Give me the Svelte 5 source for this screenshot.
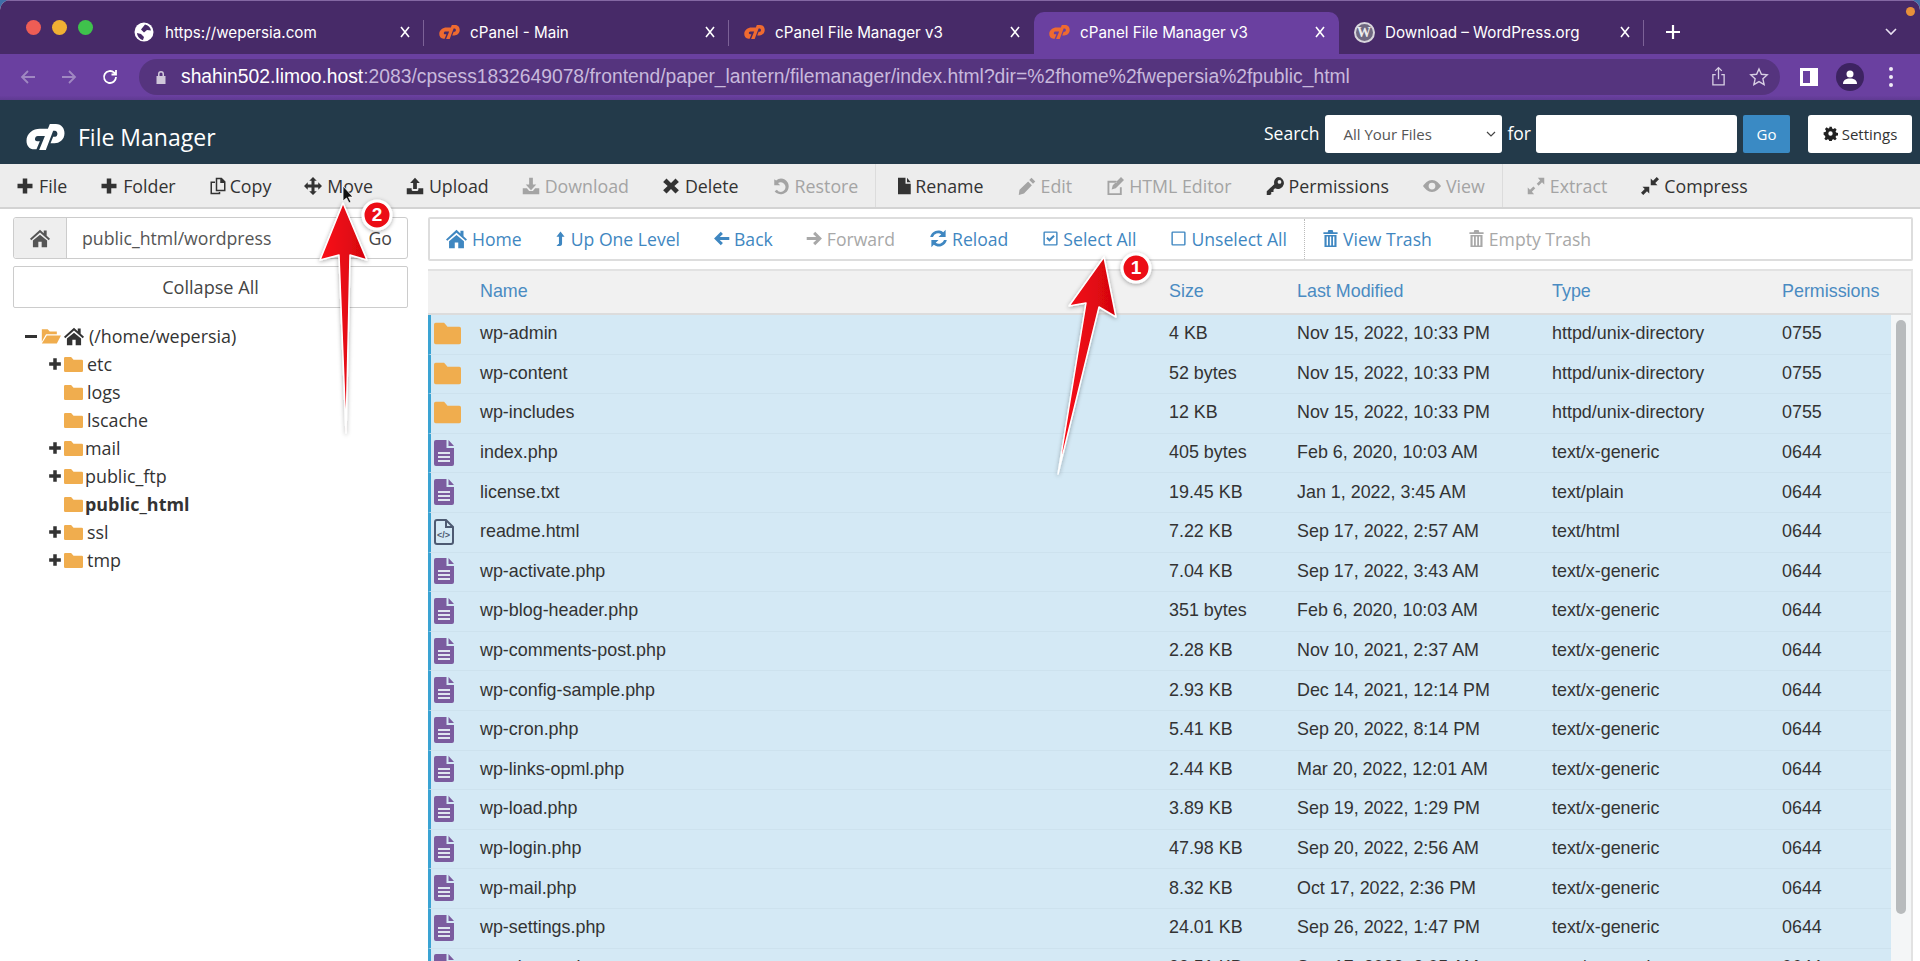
<script lang="ts">
  const icons: Record<string, string> = {
    plus: 'M9 2h6v7h7v6h-7v7H9v-7H2V9h7z',
    copy: 'M9 1h8l5 5v13H9zM11 3v14h9V8h-5V3zM2 6h6v2H4v13h9v-1h2v3H2z',
    move: 'M12 0l5 5H14v5h5V7l5 5-5 5v-3h-5v5h3l-5 5-5-5h3v-5H5v3l-5-5 5-5v3h5V5H7z',
    upload: 'M12 1l6.500 7H14.500v8h-5V8H5.500zM1 15h6.500v2a1.500 1.500 0 001.500 1.500h6a1.500 1.500 0 001.500-1.500v-2H23v8H1z',
    download: 'M9.500 1h5v9h4.500L12 17.500 5 10h4.500zM1 15h5.500l3 3.500h5l3-3.500H23v8H1z',
    times: 'M6 2l6 6 6-6 4.500 4.500-6 5.500 6 5.500-4.500 4.500-6-6-6 6-4.500-4.500 6-5.500-6-5.500z',
    undo: 'M3 3v8h8L8 8a6.500 6.500 0 114 12 6.500 6.500 0 01-5.500-3l-3 2A10.500 10.500 0 1012 2a10.500 10.500 0 00-6.500 2.500z',
    file: 'M4 1h10v8h7v14H4zM16 1l5 6h-5z',
    pencil: 'M18 1l5 5-3 3-5-5zM13.500 6l5 5L8 22l-7 2 1-7z',
    edit: 'M2 5h12v2.500H4.500v14h14v-8H21V24H2zM20 0l4 4-11 11-5.500 1.500L9 11z',
    key: 'M16 0a8 8 0 11-4 15l-2 2v3H7v3l-2 1H1v-5l10-9.500A8 8 0 0116 0zM18 4a2.500 2.500 0 100 5 2.500 2.500 0 000-5z',
    eye: 'M12 4c5.500 0 9.500 4.500 12 8-2.500 3.500-6.500 8-12 8S2.500 15.500 0 12c2.500-3.500 6.500-8 12-8zM12 7.500a4.500 4.500 0 100 9 4.500 4.500 0 000-9z',
    expand: 'M23 1v9l-3-3-4.500 4.500-2.500-2.500L17.500 4.500 14.500 1zM1 23v-9l3 3 4.500-4.500L11 15l-4.500 4.500 3 3.500z',
    compress: 'M13 11V2l3 3 5-5 3 3-5 5 3 3zM11 13v9l-3-3-5 5-3-3 5-5-3-3z',
    home: 'M12 2L0 13l1.500 1.700L12 5.500l10.500 9.200L24 13l-4-3.600V3h-3.500v3.200zM12 8L3.500 15v8H10v-6.500h4V23h6.500v-8z',
    up: 'M12 0l6.500 8.500h-4V19c0 2.500-1 4-3.500 4H5.500l3-3H9.500V8.500h-4z',
    back: 'M11 2.500l3 3L9.500 10H23v4H9.500l4.500 4.500-3 3L1.500 12z',
    forward: 'M13 2.500l-3 3 4.500 4.500H1v4h13.500L10 18.500l3 3 9.500-9.500z',
    reload: 'M21 1v9h-9l3.500-3.500A7 7 0 005 10H1.500A10.500 10.500 0 0118 4zM3 23v-9h9l-3.500 3.500A7 7 0 0019 14h3.500A10.500 10.500 0 016 20z',
    check: 'M4 2h16a2 2 0 012 2v16a2 2 0 01-2 2H4a2 2 0 01-2-2V4a2 2 0 012-2zM4 4v16h16V4zM6 12l2-2 2.500 2.500L16 7l2 2-7.500 7.500z',
    square: 'M4 2h16a2 2 0 012 2v16a2 2 0 01-2 2H4a2 2 0 01-2-2V4a2 2 0 012-2zM4 4v16h16V4z',
    trash: 'M9 0h6l1 3h6v2.500H2V3h6zM3.500 7h17v17h-17zM6.500 9v13h2V9zM11 9v13h2V9zM15.500 9v13h2V9z',
    gear: 'M10 1h4l.6 3.100 2 .8 2.600-1.800 2.700 2.700-1.800 2.600.8 2 3.100.6v4l-3.100.6-.8 2 1.800 2.600-2.700 2.700-2.600-1.800-2 .8-.6 3.100h-4l-.6-3.100-2-.8-2.600 1.800-2.700-2.700 1.800-2.600-.8-2L1 14v-4l3.100-.6.8-2-1.800-2.600 2.700-2.700 2.600 1.800 2-.8zM12 8.500a3.500 3.500 0 100 7 3.500 3.500 0 000-7z',
    folder: 'M0 4a1.500 1.500 0 011.500-1.500H9L12 6h10.500A1.500 1.500 0 0124 7.500V20a1.500 1.500 0 01-1.500 1.500h-21A1.500 1.500 0 010 20z',
    folderOpen: 'M1 4h7l2.500 2.500H19V10H6L1 19zM7 11.500h17L19 21H1z',
    cp: 'M66 14L58 36H34C24 36 22 52 32 52H40L30 76H24C8 76 0 64 0 50C0 28 20 14 40 14ZM70 0H88C106 0 114 14 114 28C114 48 98 58 84 58H72L80 38H86C94 38 96 22 86 20H80L58 78H38Z'
  };

  const tabs = [
    { title: 'https://wepersia.com', icon: 'globe' },
    { title: 'cPanel - Main', icon: 'cp' },
    { title: 'cPanel File Manager v3', icon: 'cp' },
    { title: 'cPanel File Manager v3', icon: 'cp', active: true },
    { title: 'Download – WordPress.org', icon: 'wp' }
  ];

  const groups = [
    [
      { label: 'File', icon: 'plus' },
      { label: 'Folder', icon: 'plus' },
      { label: 'Copy', icon: 'copy' },
      { label: 'Move', icon: 'move' },
      { label: 'Upload', icon: 'upload' },
      { label: 'Download', icon: 'download', off: true },
      { label: 'Delete', icon: 'times' },
      { label: 'Restore', icon: 'undo', off: true }
    ],
    [
      { label: 'Rename', icon: 'file' },
      { label: 'Edit', icon: 'pencil', off: true },
      { label: 'HTML Editor', icon: 'edit', off: true },
      { label: 'Permissions', icon: 'key' },
      { label: 'View', icon: 'eye', off: true }
    ],
    [
      { label: 'Extract', icon: 'expand', off: true },
      { label: 'Compress', icon: 'compress' }
    ]
  ];

  const actions = [
    { label: 'Home', icon: 'home' },
    { label: 'Up One Level', icon: 'up' },
    { label: 'Back', icon: 'back' },
    { label: 'Forward', icon: 'forward', off: true },
    { label: 'Reload', icon: 'reload' },
    { label: 'Select All', icon: 'check' },
    { label: 'Unselect All', icon: 'square' }
  ];

  const tree = [
    { name: 'etc', toggle: true },
    { name: 'logs' },
    { name: 'lscache' },
    { name: 'mail', toggle: true },
    { name: 'public_ftp', toggle: true },
    { name: 'public_html', current: true },
    { name: 'ssl', toggle: true },
    { name: 'tmp', toggle: true }
  ];

  const dirDate = 'Nov 15, 2022, 10:33 PM';
  const generic = 'text/x-generic';
  const files = [
    { name: 'wp-admin', size: '4 KB', date: dirDate, type: 'httpd/unix-directory', perm: '0755', kind: 'dir' },
    { name: 'wp-content', size: '52 bytes', date: dirDate, type: 'httpd/unix-directory', perm: '0755', kind: 'dir' },
    { name: 'wp-includes', size: '12 KB', date: dirDate, type: 'httpd/unix-directory', perm: '0755', kind: 'dir' },
    { name: 'index.php', size: '405 bytes', date: 'Feb 6, 2020, 10:03 AM', type: generic, perm: '0644', kind: 'file' },
    { name: 'license.txt', size: '19.45 KB', date: 'Jan 1, 2022, 3:45 AM', type: 'text/plain', perm: '0644', kind: 'file' },
    { name: 'readme.html', size: '7.22 KB', date: 'Sep 17, 2022, 2:57 AM', type: 'text/html', perm: '0644', kind: 'html' },
    { name: 'wp-activate.php', size: '7.04 KB', date: 'Sep 17, 2022, 3:43 AM', type: generic, perm: '0644', kind: 'file' },
    { name: 'wp-blog-header.php', size: '351 bytes', date: 'Feb 6, 2020, 10:03 AM', type: generic, perm: '0644', kind: 'file' },
    { name: 'wp-comments-post.php', size: '2.28 KB', date: 'Nov 10, 2021, 2:37 AM', type: generic, perm: '0644', kind: 'file' },
    { name: 'wp-config-sample.php', size: '2.93 KB', date: 'Dec 14, 2021, 12:14 PM', type: generic, perm: '0644', kind: 'file' },
    { name: 'wp-cron.php', size: '5.41 KB', date: 'Sep 20, 2022, 8:14 PM', type: generic, perm: '0644', kind: 'file' },
    { name: 'wp-links-opml.php', size: '2.44 KB', date: 'Mar 20, 2022, 12:01 AM', type: generic, perm: '0644', kind: 'file' },
    { name: 'wp-load.php', size: '3.89 KB', date: 'Sep 19, 2022, 1:29 PM', type: generic, perm: '0644', kind: 'file' },
    { name: 'wp-login.php', size: '47.98 KB', date: 'Sep 20, 2022, 2:56 AM', type: generic, perm: '0644', kind: 'file' },
    { name: 'wp-mail.php', size: '8.32 KB', date: 'Oct 17, 2022, 2:36 PM', type: generic, perm: '0644', kind: 'file' },
    { name: 'wp-settings.php', size: '24.01 KB', date: 'Sep 26, 2022, 1:47 PM', type: generic, perm: '0644', kind: 'file' },
    { name: 'wp-signup.php', size: '33.51 KB', date: 'Sep 17, 2022, 3:05 AM', type: generic, perm: '0644', kind: 'file' }
  ];
</script>

{#snippet icon(name: string, cls = 'ico')}
  <svg class={cls} viewBox="0 0 24 24" aria-hidden="true"><path fill-rule="evenodd" d={icons[name]} /></svg>
{/snippet}

<div class="window">
  <div class="tabstrip">
    <div class="lights">
      <span class="light red"></span>
      <span class="light yellow"></span>
      <span class="light green"></span>
    </div>
    {#each tabs as tab}
      <div class="tab" class:active={tab.active}>
        <span class="favicon">
          {#if tab.icon === 'cp'}
            <svg class="fav-cp" viewBox="0 0 114 78"><path d={icons.cp} /></svg>
          {:else if tab.icon === 'globe'}
            <svg class="fav" viewBox="0 0 20 20">
              <circle cx="10" cy="10" r="9.500" fill="#fff" />
              <path fill="#472a68" d="M11 2.500c3 .5 5.500 2.500 6 6l-4-.5-3 2.500-3-3zM3 11l4 1 3 3-1 3c-3-.5-5.500-3-6-7z" />
            </svg>
          {:else}
            <span class="fav-wp">W</span>
          {/if}
        </span>
        <span class="tab-title">{tab.title}</span>
        <svg class="tab-close" viewBox="0 0 10 12"><path d="M1 1l8 10M9 1L1 11" /></svg>
      </div>
    {/each}
    <svg class="newtab" viewBox="0 0 16 16"><path d="M8 1v14M1 8h14" /></svg>
    <svg class="chevron" viewBox="0 0 12 8"><path d="M1 1l5 5 5-5" /></svg>
    <span class="update-dot"></span>
  </div>

  <div class="navbar">
    <svg class="nav-ico dim" viewBox="0 0 18 18"><path d="M16 9H3M9 3L3 9l6 6" /></svg>
    <svg class="nav-ico dim" viewBox="0 0 18 18"><path d="M2 9h13M9 3l6 6-6 6" /></svg>
    <svg class="nav-ico" viewBox="0 0 18 18"><path d="M15 9a6 6 0 11-1.800-4.300L15 6.500M15 2v4.500h-4.500" /></svg>
    <div class="omnibox">
      <svg class="lock" viewBox="0 0 12 14"><path d="M3 6V4a3 3 0 016 0v2h1.500v8h-9V6zM4.500 6h3V4a1.500 1.500 0 00-3 0z" /></svg>
      <span class="url"><b>shahin502.limoo.host</b>:2083/cpsess1832649078/frontend/paper_lantern/filemanager/index.html?dir=%2fhome%2fwepersia%2fpublic_html</span>
      <svg class="omni-ico share" viewBox="0 0 16 22"><path d="M8 14V2M4.500 5L8 1.500 11.500 5M5 9H2v11h12V9h-3" /></svg>
      <svg class="omni-ico star" viewBox="0 0 20 20"><path d="M10 2l2.400 5.300 5.800.6-4.300 3.900 1.200 5.700L10 14.600l-5.100 2.900 1.200-5.700L1.800 7.900l5.800-.6z" /></svg>
    </div>
    <svg class="sidepanel" viewBox="0 0 18 18"><path fill-rule="evenodd" d="M0 0h18v18H0zM3 3v12h7V3z" /></svg>
    <span class="avatar">
      <svg viewBox="0 0 16 16"><circle cx="8" cy="5" r="3.500" /><path d="M1 15c0-4 3-5.500 7-5.500s7 1.500 7 5.500z" /></svg>
    </span>
    <span class="dots"><i></i><i></i><i></i></span>
  </div>

  <header class="fm-header">
    <svg class="fm-logo" viewBox="0 0 114 78"><path d={icons.cp} /></svg>
    <span class="fm-title">File Manager</span>
    <form class="fm-search" onsubmit={(e) => e.preventDefault()}>
      <span class="search-label">Search</span>
      <span class="select">
        All Your Files
        <svg viewBox="0 0 10 6"><path d="M1 1l4 4 4-4" /></svg>
      </span>
      <span class="search-label">for</span>
      <input class="search-input" type="text" aria-label="Search" />
      <button class="go">Go</button>
      <button class="settings">{@render icon('gear', 'gear')}Settings</button>
    </form>
  </header>

  <nav class="toolbar">
    {#each groups as group, i}
      <div class="tool-group" class:first={i === 0}>
        {#each group as item}
          <span class="tool {item.icon}" class:off={item.off}>{@render icon(item.icon)}{item.label}</span>
        {/each}
      </div>
    {/each}
  </nav>

  <main class="content">
    <aside class="side">
      <div class="path-box">
        <span class="path-home">{@render icon('home')}</span>
        <span class="path-text">public_html/wordpress</span>
        <span class="path-go">Go</span>
      </div>
      <div class="collapse">Collapse All</div>
      <div class="tree">
        <div class="tree-root">
          <span class="minus"></span>
          {@render icon('folderOpen', 'root-folder')}
          {@render icon('home', 'root-home')}
          <span>(/home/wepersia)</span>
        </div>
        {#each tree as node}
          <div class="tree-row" class:current={node.current} class:wide={!['mail', 'public_ftp', 'public_html'].includes(node.name)}>
            <span class="toggle">{#if node.toggle}{@render icon('plus')}{/if}</span>
            {@render icon('folder', 'tree-folder')}
            <span>{node.name}</span>
          </div>
        {/each}
      </div>
    </aside>

    <section class="main-col">
      <div class="actions">
        {#each actions as a}
          <span class="action {a.icon}" class:off={a.off}>{@render icon(a.icon)}{a.label}</span>
        {/each}
        <span class="action-div"></span>
        <span class="action">{@render icon('trash')}View Trash</span>
        <span class="action off empty">{@render icon('trash')}Empty Trash</span>
      </div>

      <div class="table">
        <div class="row head">
          <span></span><span>Name</span><span>Size</span><span>Last Modified</span><span>Type</span><span>Permissions</span>
        </div>
        <div class="table-body">
          <div class="rows">
            {#each files as f}
              <div class="row item">
                <span class="cell-icon">
                  {#if f.kind === 'dir'}
                    {@render icon('folder', 'row-folder')}
                  {:else if f.kind === 'file'}
                    <svg class="row-file" viewBox="0 0 20 26">
                      <path fill="#7b5c9f" d="M0 2a2 2 0 012-2h10.500v8H20v16a2 2 0 01-2 2H2a2 2 0 01-2-2z" />
                      <path fill="#7b5c9f" d="M14.500 0L20 6h-5.500z" />
                      <path fill="#dfe6f0" d="M4 12h12v2H4zM4 16h12v2H4zM4 20h12v2H4z" />
                    </svg>
                  {:else}
                    <span class="html-file">
                      <svg class="row-file" viewBox="0 0 20 26">
                        <path fill="none" stroke="#4d5a72" stroke-width="2" d="M1 3a2 2 0 012-2h9l7 7v15a2 2 0 01-2 2H3a2 2 0 01-2-2zM12 1v7h7" />
                      </svg>
                      <span class="html-tag">&lt;/&gt;</span>
                    </span>
                  {/if}
                </span>
                <span>{f.name}</span>
                <span>{f.size}</span>
                <span>{f.date}</span>
                <span>{f.type}</span>
                <span>{f.perm}</span>
              </div>
            {/each}
          </div>
          <div class="scrollbar"><div class="thumb"></div></div>
        </div>
      </div>
    </section>
  </main>

  <svg class="arrows" viewBox="0 0 1920 961" aria-hidden="true">
    <defs>
      <linearGradient id="shaft" x1="0" y1="0" x2="1" y2="0">
        <stop offset="0" stop-color="#fb0d18" />
        <stop offset="1" stop-color="#d4050f" />
      </linearGradient>
      <filter id="drop" x="-30%" y="-30%" width="160%" height="160%">
        <feDropShadow dx="0" dy="1" stdDeviation="2" flood-color="#000" flood-opacity=".35" />
      </filter>
    </defs>
    <g filter="url(#drop)" stroke="#fff" stroke-width="1.500" stroke-linejoin="round">
      <path fill="url(#shaft)" d="M343 203L320 260L339 255L346 433L350 255L367 260z" />
      <path fill="url(#shaft)" d="M1104 257L1069 306L1086 303L1058 474L1099 307L1116 317z" />
      <circle cx="377" cy="215" r="14" fill="#ec0a12" stroke-width="3" />
      <circle cx="1136" cy="268" r="14" fill="#ec0a12" stroke-width="3" />
    </g>
    <path d="M343 186v15l3.500-3 2.500 5 2-1-2.500-5h4.500z" fill="#111" stroke="#fff" stroke-width=".8" />
  </svg>
  <span class="badge" style="left:377px;top:215px">2</span>
  <span class="badge" style="left:1136px;top:268px">1</span>
</div>

<style>
  :global(body) {
    margin: 0;
    background: #3f6fa8;
  }

  .window {
    position: relative;
    width: 1920px;
    height: 961px;
    overflow: hidden;
    display: flex;
    flex-direction: column;
    background: #fff;
    border-radius: 10px 10px 0 0;
    font-family: 'Open Sans', sans-serif;
    color: #333;
  }

  /* browser chrome */
  .tabstrip {
    position: relative;
    flex: none;
    height: 54px;
    display: flex;
    align-items: flex-end;
    box-sizing: border-box;
    border-top: 1px solid #8468a3;
    background: #472a68;
    font-family: 'Inter', 'Liberation Sans', sans-serif;
    color: #fff;
  }

  .lights {
    width: 119px;
    height: 53px;
    box-sizing: border-box;
    padding: 19px 0 0 26px;
    display: flex;
    gap: 11px;
  }

  .light {
    width: 15px;
    height: 15px;
    border-radius: 50%;
  }

  .red { background: #ee5d55; }
  .yellow { background: #f0b033; }
  .green { background: #3fc24c; }

  .tab {
    position: relative;
    width: 305px;
    height: 42px;
    box-sizing: border-box;
    padding: 0 14px 2px 16px;
    display: flex;
    align-items: center;
    font-size: 15.200px;
  }

  .tab::after {
    content: '';
    position: absolute;
    right: 0;
    top: 8px;
    height: 26px;
    width: 1px;
    background: #7c6297;
  }

  .tab:nth-child(4)::after,
  .tab.active::after {
    display: none;
  }

  .tab.active {
    background: #6a40a0;
    border-radius: 10px 10px 0 0;
  }

  .favicon {
    width: 18px;
    height: 20px;
    margin-right: 12px;
    display: flex;
    align-items: center;
    justify-content: center;
  }

  .fav { width: 20px; height: 20px; flex: none; }

  .fav-cp {
    width: 21px;
    height: 14px;
    flex: none;
    fill: #ef6a30;
  }

  .fav-wp {
    width: 21px;
    height: 21px;
    flex: none;
    box-sizing: border-box;
    border-radius: 50%;
    border: 2px solid #d8d6dc;
    background: #6f6880;
    color: #ececec;
    font: bold 14px/17px 'Liberation Serif', serif;
    text-align: center;
  }

  .tab-title { white-space: nowrap; }

  .tab-close {
    width: 10px;
    height: 12px;
    margin-left: auto;
    fill: none;
    stroke: #fff;
    stroke-width: 1.600;
  }

  .newtab {
    position: absolute;
    left: 1665px;
    top: 23px;
    width: 16px;
    height: 16px;
    fill: none;
    stroke: #fff;
    stroke-width: 2.200;
  }

  .chevron {
    position: absolute;
    left: 1885px;
    top: 27px;
    width: 12px;
    height: 8px;
    fill: none;
    stroke: #e8e0f0;
    stroke-width: 1.600;
  }

  .update-dot {
    position: absolute;
    left: 1906px;
    top: 6px;
    width: 9px;
    height: 9px;
    border-radius: 50%;
    background: #e8903a;
  }

  .navbar {
    flex: none;
    height: 46px;
    display: flex;
    align-items: center;
    background: linear-gradient(#6a40a0, #6a40a0 90%, #5f3a92);
    padding-left: 19px;
    gap: 23px;
  }

  .nav-ico {
    width: 18px;
    height: 18px;
    flex: none;
    fill: none;
    stroke: #fff;
    stroke-width: 1.800;
  }

  .nav-ico.dim { stroke: #a088c2; }

  .omnibox {
    flex: none;
    width: 1641px;
    height: 36px;
    box-sizing: border-box;
    margin-left: -3px;
    border-radius: 18px;
    background: #55347e;
    padding-left: 42px;
    display: flex;
    align-items: center;
    position: relative;
    font-family: 'Liberation Sans', sans-serif;
    font-size: 19.300px;
    color: #c8b9dc;
  }

  .lock {
    position: absolute;
    left: 16px;
    top: 11px;
    width: 12px;
    height: 14px;
    fill: #cfc7da;
  }

  .url { white-space: nowrap; }
  .url b { font-weight: 400; color: #fff; }

  .omni-ico {
    position: absolute;
    fill: none;
    stroke: #d8cfe4;
    stroke-width: 1.400;
  }

  .share { left: 1572px; top: 7px; width: 15px; height: 21px; }
  .star { left: 1610px; top: 8px; width: 20px; height: 20px; }

  .sidepanel {
    width: 18px;
    height: 18px;
    flex: none;
    margin-left: -3px;
    fill: #fff;
  }

  .avatar {
    flex: none;
    width: 28px;
    height: 28px;
    margin-left: -5px;
    border-radius: 50%;
    background: #3d2361;
    display: flex;
    align-items: center;
    justify-content: center;
  }

  .avatar svg { width: 16px; height: 16px; fill: #fff; }

  .dots {
    display: flex;
    flex-direction: column;
    gap: 4px;
    margin-left: 2px;
  }

  .dots i {
    width: 4px;
    height: 4px;
    border-radius: 50%;
    background: #f0ebf5;
  }

  /* cPanel header */
  .fm-header {
    flex: none;
    height: 64px;
    display: flex;
    align-items: center;
    background: #233a4a;
    color: #fff;
    padding-left: 26px;
  }

  .fm-logo {
    width: 39px;
    height: 26px;
    fill: #fff;
    margin: 10px 13px 0 0;
  }

  .fm-title { font-size: 23px; margin-top: 10px; }

  .fm-search {
    margin-left: auto;
    margin-right: 8px;
    display: flex;
    align-items: center;
    margin-top: 3px;
  }

  .search-label { font-size: 17.500px; margin-top: -2px; }

  .select {
    width: 177px;
    height: 38px;
    box-sizing: border-box;
    margin: 0 5px 0 6px;
    padding-left: 18px;
    border-radius: 3px;
    background: #fff;
    color: #555;
    font-size: 15px;
    display: flex;
    align-items: center;
    position: relative;
  }

  .select svg {
    position: absolute;
    right: 6px;
    top: 16px;
    width: 10px;
    height: 6px;
    fill: none;
    stroke: #444;
    stroke-width: 1.200;
  }

  .search-input {
    width: 201px;
    height: 38px;
    box-sizing: border-box;
    margin-left: 5px;
    border: 0;
    border-radius: 3px;
    background: #fff;
  }

  .go {
    width: 47px;
    height: 38px;
    margin-left: 6px;
    border: 0;
    border-radius: 2px;
    background: #3a8ac4;
    color: #fff;
    font: 15px 'Open Sans', sans-serif;
  }

  .settings {
    width: 104px;
    height: 38px;
    margin-left: 18px;
    padding: 0;
    border: 0;
    border-radius: 3px;
    background: #fff;
    color: #333;
    font: 15px 'Open Sans', sans-serif;
    display: flex;
    align-items: center;
    justify-content: center;
    gap: 4px;
  }

  .gear { width: 15px; height: 15px; fill: #222; }

  /* file toolbar */
  .toolbar {
    flex: none;
    height: 45px;
    box-sizing: border-box;
    display: flex;
    background: #ededed;
    border-bottom: 2px solid #d3d3d3;
    font-size: 17.800px;
  }

  .tool-group {
    display: flex;
    align-items: center;
    gap: 34px;
    padding: 0 17px 0 21px;
    border-right: 1px solid #dcdcdc;
  }

  .tool-group.first { padding-left: 16px; gap: 33px; }
  .tool-group:last-child { border: 0; padding-left: 24px; }

  .tool {
    display: flex;
    align-items: center;
    gap: 5px;
    color: #333;
    white-space: nowrap;
  }

  .tool .ico { width: 18px; height: 18px; }
  .tool.file .ico { margin-left: -2px; margin-right: -3px; }
  .tool.copy .ico { margin-right: -2px; }
  .tool.off { color: #a4a4a4; }

  .ico {
    width: 16px;
    height: 16px;
    flex: none;
    fill: currentColor;
  }

  /* body */
  .content {
    flex: 1;
    min-height: 0;
    display: grid;
    grid-template-columns: 395px 1485px;
    column-gap: 20px;
    padding: 8px 0 0 13px;
  }

  .side { min-width: 0; }

  .path-box {
    height: 42px;
    box-sizing: border-box;
    display: flex;
    align-items: center;
    border: 1px solid #ccc;
    border-radius: 3px;
    font-size: 17.700px;
    color: #555;
  }

  .path-home {
    width: 52px;
    height: 40px;
    display: flex;
    align-items: center;
    justify-content: center;
    background: #eee;
    border-right: 1px solid #ccc;
    border-radius: 3px 0 0 3px;
  }

  .path-home .ico { width: 20px; height: 20px; }

  .path-text { padding-left: 15px; flex: 1; }
  .path-go { padding-right: 15px; color: #444; }

  .collapse {
    margin-top: 7px;
    height: 42px;
    box-sizing: border-box;
    border: 1px solid #ccc;
    border-radius: 2px;
    display: flex;
    align-items: center;
    justify-content: center;
    font-size: 18.100px;
    color: #444;
  }

  .tree {
    margin-top: 14px;
    font-size: 17.900px;
    color: #333;
  }

  .tree-root,
  .tree-row {
    height: 28px;
    display: flex;
    align-items: center;
  }

  .minus {
    width: 12px;
    height: 3px;
    margin-left: 12px;
    background: #333;
    flex: none;
  }

  .root-folder {
    width: 20px;
    height: 20px;
    margin-left: 4px;
    fill: #f0ad4e;
  }

  .root-home {
    width: 20px;
    height: 20px;
    margin: 0 5px 0 3px;
    fill: #333;
  }

  .toggle {
    width: 13px;
    margin-left: 35px;
    display: flex;
  }

  .toggle .ico { width: 14px; height: 14px; }

  .tree-folder {
    width: 19px;
    height: 19px;
    margin: 0 2px 0 3px;
    fill: #f0ad4e;
    flex: none;
  }

  .tree-row.wide .tree-folder { margin-right: 4px; }
  .tree-row.current { font-weight: 700; }

  .main-col {
    min-width: 0;
    min-height: 0;
    display: flex;
    flex-direction: column;
  }

  .actions {
    flex: none;
    height: 44px;
    box-sizing: border-box;
    display: flex;
    align-items: center;
    gap: 34px;
    padding: 0 0 1px 16px;
    border: 2px solid #ddd;
    border-radius: 2px;
    font-size: 17.600px;
    color: #3f87c1;
  }

  .action {
    display: flex;
    align-items: center;
    gap: 4px;
    white-space: nowrap;
  }

  .action.off { color: #a8a8a8; }
  .action .ico { width: 17px; height: 17px; }
  .action.home .ico { width: 21px; height: 21px; margin-right: 1px; }
  .action.up .ico { width: 15px; height: 20px; margin-right: -1px; margin-left: -3px; }
  .action.back { margin-left: -1px; }
  .action.forward { margin-left: -1px; }
  .action.reload .ico { width: 19px; height: 19px; }
  .action.empty { margin-left: 2px; }

  .action-div {
    width: 0;
    height: 40px;
    margin: 0 -17px 0 -17px;
    border-left: 1px dotted #bbb;
  }

  .table {
    flex: 1;
    min-height: 0;
    margin-top: 8px;
    display: flex;
    flex-direction: column;
    border: 2px solid #e2e2e2;
    border-width: 2px 2px 0 0;
    font-family: 'Liberation Sans', Arial, sans-serif;
    font-size: 17.900px;
  }

  .row {
    display: grid;
    grid-template-columns: 52px 689px 128px 255px 230px 1fr;
    align-items: center;
  }

  .row.head {
    flex: none;
    height: 40px;
    padding-bottom: 2px;
    background: #f1f1f1;
    color: #4a8bc2;
    border-bottom: 2px solid #dcdcdc;
    box-sizing: content-box;
  }

  .table-body {
    flex: 1;
    min-height: 0;
    display: flex;
    overflow: hidden;
  }

  .rows { flex: 1; min-width: 0; }

  .row.item {
    height: 39.600px;
    padding-bottom: 1px;
    box-sizing: border-box;
    background: #d4e9f5;
    border-left: 3px solid #3aa3d3;
    border-bottom: 1px solid #cde2ee;
    grid-template-columns: 49px 689px 128px 255px 230px 1fr;
    color: #333;
  }

  .cell-icon {
    display: flex;
    align-items: center;
    padding-left: 3px;
  }

  .row-folder {
    width: 27px;
    height: 27px;
    fill: #f0ad4e;
  }

  .row-file {
    width: 20px;
    height: 26px;
    display: block;
  }

  .html-file { position: relative; display: block; }

  .html-tag {
    position: absolute;
    left: 3px;
    top: 10px;
    font: bold 9px/12px 'Liberation Sans', sans-serif;
    color: #4d5a72;
  }

  .scrollbar {
    flex: none;
    width: 20px;
    background: #f4f6f7;
    padding: 5px 5px 0;
    box-sizing: border-box;
  }

  .thumb {
    width: 10px;
    height: 594px;
    border-radius: 5px;
    background: #b8bbbd;
  }

  /* annotations over the page */
  .arrows {
    position: absolute;
    inset: 0;
    width: 1920px;
    height: 961px;
    pointer-events: none;
  }

  .badge {
    position: absolute;
    width: 28px;
    height: 28px;
    margin: -14px 0 0 -14px;
    color: #fff;
    font: bold 19px/28px 'Liberation Sans', sans-serif;
    text-align: center;
  }
</style>
